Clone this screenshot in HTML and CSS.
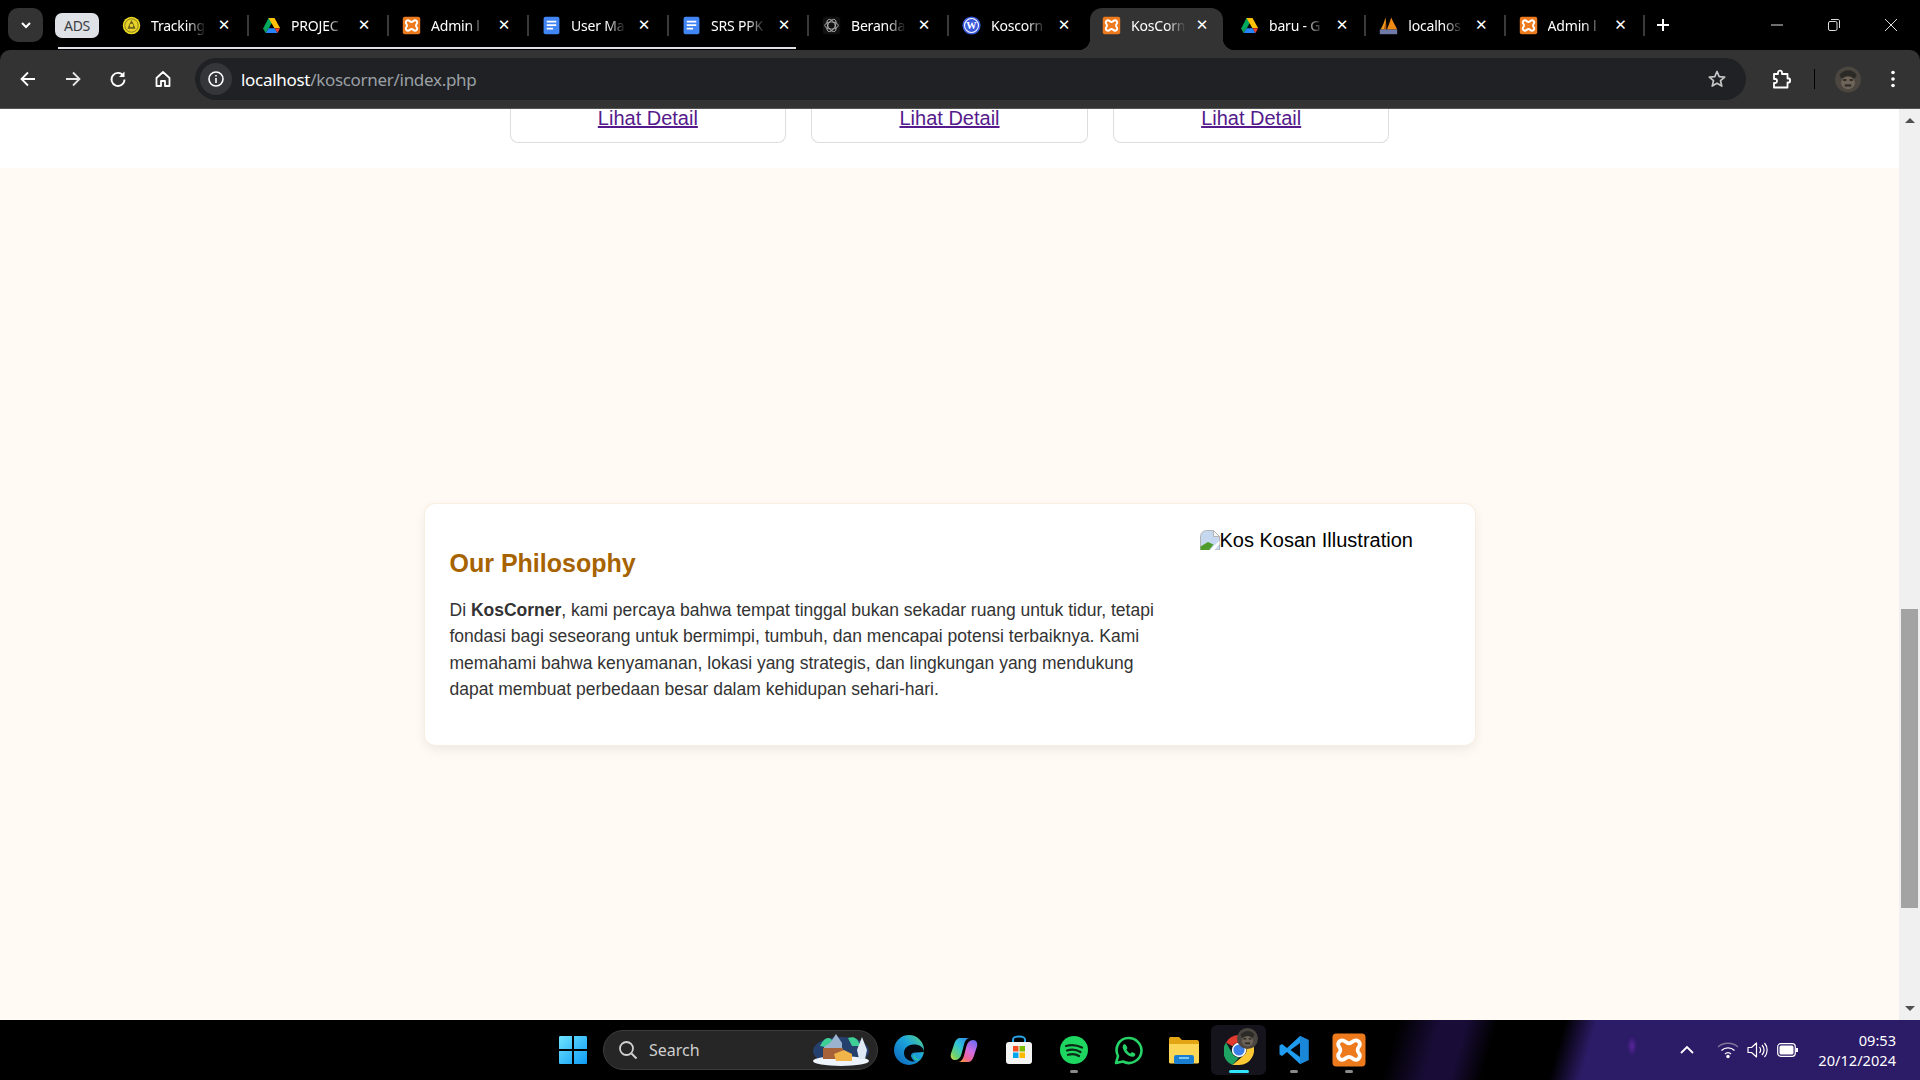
FILE: index.html
```html
<!DOCTYPE html>
<html>
    <head>
        <meta charset="utf-8">
        <title>KosCorner</title>
        <link rel="stylesheet" href="styles.css">
    </head>
    <body>
        <svg class="defs" width="0" height="0">
            <defs>
                <symbol id="i-xampp" viewBox="0 0 24 24">
                    <rect x="1" y="1" width="22" height="22" rx="2.500" fill="#ee7a1e"/>
                    <path d="M7.500 5.500C9.500 5.500 10 7.500 12 7.500 14 7.500 14.500 5.500 16.500 5.500 19 5.500 20 8.500 18.500 10 17.500 11 17.500 13 18.500 14 20 15.500 19 18.500 16.500 18.500 14.500 18.500 14 16.500 12 16.500 10 16.500 9.500 18.500 7.500 18.500 5 18.500 4 15.500 5.500 14 6.500 13 6.500 11 5.500 10 4 8.500 5 5.500 7.500 5.500Z" fill="none" stroke="#fff" stroke-width="2.500" stroke-linejoin="round"/>
                </symbol>
                <symbol id="i-drive" viewBox="0 0 24 24">
                    <path d="M8.200 2.500H15.800L12 9.500 8 16.500H1.200Z" fill="#00a85d"/>
                    <path d="M8.200 2.500H15.800L22.800 15H15.500Z" fill="#ffc107"/>
                    <path d="M1.200 15.500H8.500L5 21.500H4.500Z" fill="#0f9d58"/>
                    <path d="M8.500 15.500H16L19.500 21.500H4.800Z" fill="#2684fc"/>
                    <path d="M16 15.500H22.800L19.500 21.500Z" fill="#ea4335"/>
                </symbol>
                <symbol id="i-docs" viewBox="0 0 24 24">
                    <rect x="2" y="1" width="20" height="22" rx="2.500" fill="#4285f4"/>
                    <path d="M6 7H18M6 11.500H18M6 16H14" stroke="#fff" stroke-width="2.200" fill="none"/>
                </symbol>
                <symbol id="i-seal" viewBox="0 0 24 24">
                    <circle cx="12" cy="12" r="11" fill="#f0dc1e"/>
                    <circle cx="12" cy="12" r="8.500" fill="#e8d22a" stroke="#6f6420" stroke-width="1"/>
                    <path d="M12 5L15 11 17 16H7L9 11Z" fill="#6a5f1e"/>
                    <circle cx="12" cy="12" r="2.200" fill="#e8d22a"/>
                </symbol>
                <symbol id="i-gpt" viewBox="0 0 24 24">
                    <rect x="1" y="1" width="22" height="22" rx="4" fill="#111"/>
                    <g fill="none" stroke="#b9b9b9" stroke-width="1.100">
                        <ellipse cx="12" cy="12" rx="8.500" ry="4.500"/>
                        <ellipse cx="12" cy="12" rx="8.500" ry="4.500" transform="rotate(60 12 12)"/>
                        <ellipse cx="12" cy="12" rx="8.500" ry="4.500" transform="rotate(120 12 12)"/>
                    </g>
                </symbol>
                <symbol id="i-wp" viewBox="0 0 24 24">
                    <circle cx="12" cy="12" r="11.500" fill="#3c5bdc"/>
                    <circle cx="12" cy="12" r="8.800" fill="none" stroke="#fff" stroke-width="1.300"/>
                    <text x="12" y="16.500" text-anchor="middle" font-family="Liberation Serif, serif" font-size="13" font-weight="700" fill="#fff">W</text>
                </symbol>
                <symbol id="i-pma" viewBox="0 0 24 24">
                    <path d="M2 17C5 12 7 7 8 2 9 7 9.500 12 9 17Z" fill="#f29a1f"/>
                    <path d="M10 17C12 12 14 7 15.500 2 18 8 21 13 23 17Z" fill="#f08a12"/>
                    <path d="M6 17C7 13 8 10 8 6 9 10 9 13 9 17Z" fill="#b9590c"/>
                    <rect x="1" y="17" width="22" height="6" fill="#6f7aa6"/>
                </symbol>
                <symbol id="i-avatar" viewBox="0 0 24 24">
                    <circle cx="12" cy="12" r="12" fill="#4b463f"/>
                    <path d="M4 8C8 2 17 2 20 8L18 11H6Z" fill="#2c2a27"/>
                    <ellipse cx="12" cy="15" rx="6.500" ry="6" fill="#6e6558"/>
                    <path d="M7.500 12.500H10.500M13.500 12.500H16.500" stroke="#1d1b19" stroke-width="1.500"/>
                    <path d="M9 17.500H15" stroke="#2c2a27" stroke-width="2"/>
                </symbol>
            </defs>
        </svg>

        <div class="tabstrip">
            <button class="tab-search">
                <svg width="14" height="14" viewBox="0 0 14 14"><path d="M3 5l4 4 4-4" fill="none" stroke="#fff" stroke-width="2"/></svg>
            </button>
            <span class="group-pill">ADS</span>
            <div class="tabs">
                <div class="tab"><svg class="fav"><use href="#i-seal"/></svg><span class="tab-title">Tracking</span><span class="tab-x">&#10005;</span></div>
                <div class="tab"><svg class="fav"><use href="#i-drive"/></svg><span class="tab-title">PROJEC</span><span class="tab-x">&#10005;</span></div>
                <div class="tab"><svg class="fav"><use href="#i-xampp"/></svg><span class="tab-title">Admin l</span><span class="tab-x">&#10005;</span></div>
                <div class="tab"><svg class="fav"><use href="#i-docs"/></svg><span class="tab-title">User Ma</span><span class="tab-x">&#10005;</span></div>
                <div class="tab"><svg class="fav"><use href="#i-docs"/></svg><span class="tab-title">SRS PPK</span><span class="tab-x">&#10005;</span></div>
                <div class="tab"><svg class="fav"><use href="#i-gpt"/></svg><span class="tab-title">Beranda</span><span class="tab-x">&#10005;</span></div>
                <div class="tab no-sep"><svg class="fav"><use href="#i-wp"/></svg><span class="tab-title">Koscorn</span><span class="tab-x">&#10005;</span></div>
                <div class="tab active"><svg class="fav"><use href="#i-xampp"/></svg><span class="tab-title">KosCorn</span><span class="tab-x">&#10005;</span></div>
                <div class="tab"><svg class="fav"><use href="#i-drive"/></svg><span class="tab-title">baru - G</span><span class="tab-x">&#10005;</span></div>
                <div class="tab"><svg class="fav"><use href="#i-pma"/></svg><span class="tab-title">localhos</span><span class="tab-x">&#10005;</span></div>
                <div class="tab"><svg class="fav"><use href="#i-xampp"/></svg><span class="tab-title">Admin l</span><span class="tab-x">&#10005;</span></div>
            </div>
            <span class="new-tab">
                <svg width="16" height="16" viewBox="0 0 16 16"><path d="M8 2V14M2 8H14" stroke="#fff" stroke-width="2"/></svg>
            </span>
            <div class="win-btns">
                <svg width="14" height="14" viewBox="0 0 14 14"><path d="M1 7H13" stroke="#ddd" stroke-width="1"/></svg>
                <svg width="14" height="14" viewBox="0 0 14 14"><rect x="1.500" y="3.500" width="8.500" height="9" rx="1.500" fill="none" stroke="#ddd"/><path d="M4 1.500H11C12 1.500 12.500 2 12.500 3V10" fill="none" stroke="#ddd"/></svg>
                <svg width="14" height="14" viewBox="0 0 14 14"><path d="M1 1L13 13M13 1L1 13" stroke="#ddd" stroke-width="1"/></svg>
            </div>
        </div>

        <div class="toolbar">
            <div class="nav-btns">
                <svg width="20" height="20" viewBox="0 0 20 20"><path d="M17 10H4M10 3.500L3.500 10 10 16.500" fill="none" stroke="#fff" stroke-width="1.800"/></svg>
                <svg width="20" height="20" viewBox="0 0 20 20"><path d="M3 10H16M10 3.500L16.500 10 10 16.500" fill="none" stroke="#e8e8e8" stroke-width="1.800"/></svg>
                <svg width="20" height="20" viewBox="0 0 20 20"><path d="M15.500 7A6.500 6.500 0 1 0 16.500 10.500" fill="none" stroke="#fff" stroke-width="1.800"/><path d="M16.500 2.500V8H11Z" fill="#fff"/></svg>
                <svg width="20" height="20" viewBox="0 0 20 20"><path d="M3.500 9L10 3 16.500 9V17H12V12H8V17H3.500Z" fill="none" stroke="#fff" stroke-width="1.800" stroke-linejoin="round"/></svg>
            </div>
            <div class="omnibox">
                <span class="site-info">
                    <svg width="18" height="18" viewBox="0 0 18 18"><circle cx="9" cy="9" r="7" fill="none" stroke="#fff" stroke-width="1.600"/><path d="M9 8V13M9 5V6.500" stroke="#fff" stroke-width="1.600"/></svg>
                </span>
                <span class="url"><b>localhost</b>/koscorner/index.php</span>
                <svg class="star" width="20" height="20" viewBox="0 0 20 20"><path d="M10 2.500L12.200 7.600 17.700 8.100 13.500 11.700 14.800 17.100 10 14.300 5.200 17.100 6.500 11.700 2.300 8.100 7.800 7.600Z" fill="none" stroke="#c4c7c5" stroke-width="1.700" stroke-linejoin="round"/></svg>
            </div>
            <svg class="ext" width="22" height="22" viewBox="0 0 22 22"><path d="M4 6H8V4.500C8 2 12 2 12 4.500V6H17.500V10.500H19C20.500 10.500 20.500 14.500 19 14.500H17.500V19.500H4V15H5.500C7.500 15 7.500 11 5.500 11H4Z" fill="none" stroke="#fff" stroke-width="1.800" stroke-linejoin="round"/></svg>
            <span class="tool-sep"></span>
            <svg class="profile"><use href="#i-avatar"/></svg>
            <svg class="kebab" width="6" height="20" viewBox="0 0 6 20"><circle cx="3" cy="3.500" r="1.800" fill="#fff"/><circle cx="3" cy="10" r="1.800" fill="#fff"/><circle cx="3" cy="16.500" r="1.800" fill="#fff"/></svg>
        </div>

        <div class="viewport">
            <div class="page">
                <section class="rooms">
                    <div class="room-card"><a href="#">Lihat Detail</a></div>
                    <div class="room-card"><a href="#">Lihat Detail</a></div>
                    <div class="room-card"><a href="#">Lihat Detail</a></div>
                </section>
                <section class="about">
                    <div class="about-card">
                        <div class="about-text">
                            <h2>Our Philosophy</h2>
                            <p>Di <strong>KosCorner</strong>, kami percaya bahwa tempat tinggal bukan sekadar ruang untuk tidur, tetapi fondasi bagi seseorang untuk bermimpi, tumbuh, dan mencapai potensi terbaiknya. Kami memahami bahwa kenyamanan, lokasi yang strategis, dan lingkungan yang mendukung dapat membuat perbedaan besar dalam kehidupan sehari-hari.</p>
                        </div>
                        <div class="about-img">
                            <svg class="broken" width="20" height="20" viewBox="0 0 20 20">
                                <path d="M.500 7C.500 3 3 .500 7 .500H13.500L19.500 6.500V20H.500Z" fill="#c6d8f0" stroke="#b4b4b4"/>
                                <path d="M13.500 .500V6.500H19.500Z" fill="#f4f4f4" stroke="#b4b4b4"/>
                                <path d="M.500 20V16.500L8 12 13.500 14.500 9 20Z" fill="#4e9b2c"/>
                                <path d="M10 20L19.500 10.500V14L14.500 20Z" fill="#fff"/>
                            </svg><span class="alt-text">Kos Kosan Illustration</span>
                        </div>
                    </div>
                </section>
            </div>
            <div class="scrollbar">
                <span class="arrow-up"></span>
                <div class="scroll-track"><div class="scroll-thumb"></div></div>
                <span class="arrow-down"></span>
            </div>
        </div>

        <div class="taskbar">
            <svg class="win-logo" width="30" height="30" viewBox="0 0 30 30">
                <defs><linearGradient id="win" x1="0" y1="0" x2="1" y2="1"><stop offset="0" stop-color="#6ee4ff"/><stop offset="1" stop-color="#0f9bf5"/></linearGradient></defs>
                <path d="M1 2.500C1 1.500 1.500 1 2.500 1H14V14H1ZM16 1H27.500C28.500 1 29 1.500 29 2.500V14H16ZM1 16H14V29H2.500C1.500 29 1 28.500 1 27.500ZM16 16H29V27.500C29 28.500 28.500 29 27.500 29H16Z" fill="url(#win)"/>
            </svg>
            <div class="search-box">
                <svg width="20" height="20" viewBox="0 0 20 20"><circle cx="8.500" cy="8.500" r="6.500" fill="none" stroke="#d0d0d0" stroke-width="1.800"/><path d="M13.500 13.500L18.500 18.500" stroke="#d0d0d0" stroke-width="2"/></svg>
                <span class="search-label">Search</span>
                <svg class="search-art" width="58" height="32" viewBox="0 0 58 32">
                    <ellipse cx="29" cy="17" rx="28" ry="14" fill="#26406e"/>
                    <path d="M8 12C12 4 16 2 20 6L18 14ZM36 4C42 2 46 4 48 12L40 12Z" fill="#3ecf96"/>
                    <ellipse cx="29" cy="27" rx="28" ry="5" fill="#eef4fb"/>
                    <path d="M18 9L24 0 30 9V14H12V13Z" fill="#9cb3cf"/>
                    <rect x="11" y="14" width="20" height="11" fill="#a8623a"/>
                    <path d="M22 20L32 16 40 20V27H24Z" fill="#f0b44a"/>
                    <path d="M50 3L55 16 53 25H47L45 16Z" fill="#dfe9f3"/>
                </svg>
            </div>
            <div class="pinned">
                <span class="pin">
                    <svg width="32" height="32" viewBox="0 0 32 32">
                        <defs><linearGradient id="edge" x1="0" y1="1" x2="1" y2="0"><stop offset="0" stop-color="#0b5fb8"/><stop offset="0.6" stop-color="#1da5dc"/><stop offset="1" stop-color="#5ed57a"/></linearGradient></defs>
                        <circle cx="16" cy="16" r="15" fill="url(#edge)"/>
                        <path d="M31 18C31 13 26 10.500 21 10.500 14 10.500 11 15 11 19 11 25 17 28 22 27.500 19 25.500 18 23 18 21.500 18 19 21 18 24 18.500Z" fill="#05080f"/>
                        <path d="M20 21C20 26 25 28 28 25 25 26 22 24 22 21Z" fill="#2bc1a2"/>
                    </svg>
                </span>
                <span class="pin">
                    <svg width="30" height="30" viewBox="0 0 30 30">
                        <defs><linearGradient id="cop1" x1="1" y1="0" x2="0" y2="1"><stop offset="0" stop-color="#2f7ff0"/><stop offset="0.45" stop-color="#2fc4d8"/><stop offset="0.8" stop-color="#6fd36a"/><stop offset="1" stop-color="#e9dc4a"/></linearGradient><linearGradient id="cop2" x1="0.800" y1="0" x2="0.200" y2="1"><stop offset="0" stop-color="#6d6cf0"/><stop offset="0.45" stop-color="#d46be0"/><stop offset="0.8" stop-color="#f2688c"/><stop offset="1" stop-color="#f59a3c"/></linearGradient></defs>
                        <path d="M11 3H21C17.500 3 16 6 15 9.500L12.500 19C11.500 23 9 25 6 25 2.500 25 1 22 2 18.500L5.500 8C6.500 5 8.500 3 11 3Z" fill="url(#cop1)"/>
                        <path d="M19 27H9C12.500 27 14 24 15 20.500L17.500 11C18.500 7 21 5 24 5 27.500 5 29 8 28 11.500L24.500 22C23.500 25 21.500 27 19 27Z" fill="url(#cop2)"/>
                    </svg>
                </span>
                <span class="pin">
                    <svg width="30" height="30" viewBox="0 0 30 30">
                        <path d="M9 8V5C9 2 11 1.500 15 1.500S21 2 21 5V8" fill="none" stroke="#2aa4e8" stroke-width="2"/>
                        <rect x="2" y="7" width="26" height="22" rx="3" fill="#f4f4f4"/>
                        <rect x="9" y="11" width="5.500" height="5.500" fill="#f25022"/>
                        <rect x="15.500" y="11" width="5.500" height="5.500" fill="#7fba00"/>
                        <rect x="9" y="17.500" width="5.500" height="5.500" fill="#00a4ef"/>
                        <rect x="15.500" y="17.500" width="5.500" height="5.500" fill="#ffb900"/>
                    </svg>
                </span>
                <span class="pin open">
                    <svg width="28" height="28" viewBox="0 0 28 28">
                        <circle cx="14" cy="14" r="14" fill="#1ed760"/>
                        <path d="M6 10C11 8.500 17 9 22 11.500M7 14.500C11.500 13 16.500 13.500 20.500 16M8 18.800C12 17.500 16 18 19 20" fill="none" stroke="#0c2a16" stroke-width="2.200" stroke-linecap="round"/>
                    </svg>
                </span>
                <span class="pin">
                    <svg width="31" height="31" viewBox="0 0 31 31">
                        <path d="M3 28L5 21C1 13 6 3 15.500 3 23 3 28.500 9 28.500 15.500 28.500 25 18 31 10 26.500Z" fill="none" stroke="#25d366" stroke-width="2.600" stroke-linejoin="round"/>
                        <path d="M10.500 9.500C9 11 9.500 14 12 17.500 15 21 19 22.500 21 21.500 22.500 20.500 22.500 19 22 18.500L19 17 17.500 18.500C16 18 14 16 13.500 14.500L14.500 13 13 10C12.500 9 11.500 9 10.500 9.500Z" fill="#25d366"/>
                    </svg>
                </span>
                <span class="pin">
                    <svg width="30" height="28" viewBox="0 0 30 28">
                        <path d="M0 3C0 1.500 1 1 2 1H10L13 4H28C29 4 30 5 30 6V10H0Z" fill="#e3a514"/>
                        <path d="M0 8H30V26C30 27 29 27.500 28 27.500H2C1 27.500 0 27 0 26Z" fill="#fcd657"/>
                        <rect x="5" y="19" width="20" height="9" rx="2" fill="#1a7fd0"/>
                        <rect x="10" y="21" width="10" height="2" fill="#7cc8f5"/>
                    </svg>
                </span>
                <span class="pin current">
                    <svg width="30" height="30" viewBox="0 0 30 30">
                        <path d="M15 0A15 15 0 0 1 28 7.500H15A7.500 7.500 0 0 0 8.500 11.250L2 7.500A15 15 0 0 1 15 0Z" fill="#e33b2e"/>
                        <path d="M2 7.500L8.500 18.750A7.500 7.500 0 0 0 15 22.500L8.500 30A15 15 0 0 1 2 7.500Z" fill="#1ea362"/>
                        <path d="M15 7.500H28A15 15 0 0 1 15 30H8.500L21.500 18.750A7.500 7.500 0 0 0 15 7.500Z" fill="#fcc934"/>
                        <circle cx="15" cy="15" r="7.200" fill="#fff"/>
                        <circle cx="15" cy="15" r="5.600" fill="#3c7ee8"/>
                    </svg>
                    <svg class="pin-badge"><use href="#i-avatar"/></svg>
                </span>
                <span class="pin open">
                    <svg width="30" height="30" viewBox="0 0 30 30">
                        <path d="M21 1L29.500 5V25L21 29 8 17 3 21 .500 19.500V10.500L3 9 8 13Z" fill="#1f9cf0"/>
                        <path d="M21 8L11.500 15 21 22Z" fill="#05070f"/>
                        <path d="M21 1V29L29.500 25V5Z" fill="#1a86d8"/>
                    </svg>
                </span>
                <span class="pin open">
                    <svg width="36" height="36"><use href="#i-xampp"/></svg>
                </span>
            </div>
            <div class="tray">
                <svg class="tray-up" width="14" height="10" viewBox="0 0 14 10"><path d="M1 8L7 2 13 8" fill="none" stroke="#fff" stroke-width="1.800"/></svg>
                <svg width="22" height="18" viewBox="0 0 22 18"><path d="M1 6C6 1 16 1 21 6" fill="none" stroke="#7d7799" stroke-width="1.300"/><path d="M4.500 9.500C8 6 14 6 17.500 9.500M8 13C10 11.200 12 11.200 14 13" fill="none" stroke="#fff" stroke-width="1.300"/><circle cx="11" cy="15.500" r="1.700" fill="#fff"/></svg>
                <svg width="22" height="18" viewBox="0 0 22 18"><path d="M1 6.500H4.500L9.500 2V16L4.500 11.500H1Z" fill="none" stroke="#fff" stroke-width="1.200" stroke-linejoin="round"/><path d="M12.500 6C14 8 14 10 12.500 12M15 4C17.500 7 17.500 11 15 14M17.500 2C21 6 21 12 17.500 16" fill="none" stroke="#fff" stroke-width="1.200"/></svg>
                <svg width="21" height="14" viewBox="0 0 21 14"><rect x=".700" y=".700" width="17.600" height="12.600" rx="3" fill="none" stroke="#fff" stroke-width="1.200"/><rect x="2.500" y="2.500" width="14" height="9" rx="1.500" fill="#fff"/><rect x="19" y="5" width="2" height="4" fill="#fff"/></svg>
                <div class="clock"><span>09:53</span><span>20/12/2024</span></div>
            </div>
        </div>
    </body>
</html>
```
FILE: styles.css
```css
*{
    box-sizing: border-box;
}
html, body{
    margin: 0;
    height: 100%;
    overflow: hidden;
}
body{
    display: flex;
    flex-direction: column;
    height: 1080px;
    background-color: black;
    font-family: "Noto Sans", sans-serif;
}
.defs{
    position: absolute;
}

/* tab strip */
.tabstrip{
    height: 50px;
    flex: none;
    display: flex;
    align-items: center;
    background-color: black;
    padding-left: 8px;
    position: relative;
    isolation: isolate;
    color: white;
}
.tab-search{
    width: 35px;
    height: 34px;
    border: none;
    border-radius: 10px;
    background-color: #333;
    display: flex;
    align-items: center;
    justify-content: center;
    padding: 0;
}
.group-pill{
    width: 44px;
    height: 25px;
    margin-left: 12px;
    border-radius: 7px;
    background-color: #dee1e6;
    color: #3c4043;
    font-size: 14px;
    letter-spacing: -0.3px;
    display: flex;
    align-items: center;
    justify-content: center;
}
.tabs{
    display: flex;
    margin-left: 9px;
    height: 50px;
}
/* the white underline of the ADS tab group */
.tabs::before{
    content: "";
    position: absolute;
    left: 58px;
    top: 47px;
    width: 738px;
    height: 2px;
    background-color: #dee1e6;
}
.tab{
    width: 140px;
    height: 50px;
    padding-left: 14px;
    display: flex;
    align-items: center;
    position: relative;
    font-size: 14px;
}
.tab:nth-child(n+9){
    width: 139.3px;
}
.tab::after{
    content: "";
    position: absolute;
    right: -1px;
    top: 15px;
    width: 2px;
    height: 21px;
    background-color: #3a3a3a;
}
.tab.no-sep::after{
    display: none;
}
.tab.active{
    width: 138px;
}
.tab.active .tab-x{
    margin-left: 6px;
}
.tab.active::before{
    content: "";
    position: absolute;
    left: 2px;
    right: 3px;
    top: 8px;
    bottom: 0;
    z-index: -1;
    background-color: #333;
    border-radius: 12px 12px 0 0;
}
/* the two concave corners at the foot of the active tab */
.tab.active::after{
    left: -10px;
    right: -9px;
    top: auto;
    bottom: 0;
    width: auto;
    height: 12px;
    z-index: -1;
    background:
        radial-gradient(circle at 0 0, transparent 12px, #333 12.5px) 0 0 / 12px 12px no-repeat,
        radial-gradient(circle at 100% 0, transparent 12px, #333 12.5px) 100% 0 / 12px 12px no-repeat;
}
.fav{
    width: 19px;
    height: 19px;
    flex: none;
}
.tab-title{
    width: 55px;
    margin-left: 10px;
    white-space: nowrap;
    overflow: hidden;
    letter-spacing: -0.2px;
    -webkit-mask-image: linear-gradient(to right, black 65%, transparent 100%);
    mask-image: linear-gradient(to right, black 65%, transparent 100%);
}
.tab-x{
    width: 20px;
    margin-left: 8px;
    text-align: center;
    font-size: 15px;
    font-family: "DejaVu Sans", sans-serif;
}
.new-tab{
    margin-left: 11px;
    display: flex;
}
.win-btns{
    margin-left: auto;
    display: flex;
    gap: 43px;
    padding-right: 22px;
}

/* toolbar */
.toolbar{
    height: 59px;
    flex: none;
    display: flex;
    align-items: center;
    background-color: #333;
    border-bottom: 1px solid #555;
    border-radius: 10px 10px 0 0;
    padding-left: 18px;
    padding-right: 23px;
}
.nav-btns{
    display: flex;
    gap: 25px;
}
.omnibox{
    width: 1551px;
    height: 42px;
    margin-left: 22px;
    border-radius: 21px;
    background-color: #202124;
    display: flex;
    align-items: center;
    padding-left: 5px;
    padding-right: 19px;
}
.site-info{
    width: 32px;
    height: 32px;
    border-radius: 50%;
    background-color: #35363a;
    display: flex;
    align-items: center;
    justify-content: center;
}
.url{
    margin-left: 9px;
    font-size: 17px;
    letter-spacing: -0.3px;
    color: #9aa0a6;
}
.url b{
    font-weight: 400;
    color: white;
}
.star{
    margin-left: auto;
}
.ext{
    margin-left: 24px;
}
.tool-sep{
    width: 1px;
    height: 20px;
    margin-left: 22px;
    background-color: black;
}
.profile{
    width: 26px;
    height: 27px;
    margin-left: 20px;
}
.kebab{
    margin-left: 29px;
}

/* page */
.viewport{
    flex: 1;
    min-height: 0;
    display: flex;
    background-color: white;
}
.page{
    flex: 1;
    overflow: hidden;
    font-family: "Liberation Sans", Arial, sans-serif;
}
.rooms{
    height: 59px;
    display: flex;
    justify-content: center;
    gap: 25px;
}
.room-card{
    width: 276.67px;
    height: 34px;
    border: 1px solid #ddd;
    border-top: none;
    border-radius: 0 0 8px 8px;
    text-align: center;
    font-size: 20px;
    line-height: 19px;
}
.room-card a{
    color: #551a8b;
}
.about{
    height: 852px;
    background-color: #fffaf3;
    padding-top: 336px;
}
.about-card{
    width: 1050px;
    margin: 0 auto;
    padding: 25px;
    display: flex;
    gap: 25px;
    background-color: white;
    border-radius: 10px;
    box-shadow: 0 0 0 1px #f8eee2, 0 4px 12px rgba(0, 0, 0, 0.08);
}
.about-text{
    flex: 1;
}
.about-text h2{
    margin: 20px 0 19px;
    font-size: 25px;
    line-height: 29px;
    color: #a66300;
}
.about-text p{
    margin: 0 0 17.6px;
    font-size: 17.5px;
    line-height: 26.4px;
    color: #333;
}
.about-img{
    width: 250px;
    flex: none;
    color: black;
    font-size: 20px;
    line-height: 23px;
}
.broken{
    vertical-align: -3px;
}

/* scrollbar */
.scrollbar{
    width: 21px;
    flex: none;
    display: flex;
    flex-direction: column;
    align-items: center;
    background-color: #f0f0f0;
}
.arrow-up, .arrow-down{
    width: 0;
    height: 0;
    border-left: 5px solid transparent;
    border-right: 5px solid transparent;
    flex: none;
}
.arrow-up{
    margin-top: 9px;
    border-bottom: 5px solid #505050;
}
.arrow-down{
    margin-bottom: 9px;
    border-top: 5px solid #505050;
}
.scroll-track{
    flex: 1;
    padding-top: 486px;
}
.scroll-thumb{
    width: 17px;
    height: 299px;
    background-color: #a3a3a3;
}

/* taskbar */
.taskbar{
    height: 60px;
    flex: none;
    display: flex;
    align-items: center;
    padding-left: 558px;
    padding-right: 24px;
    color: white;
    background:
        radial-gradient(ellipse 5px 10px at 1632px 26px, rgba(110, 40, 180, 0.7), transparent),
        linear-gradient(106deg, transparent 1345px, rgba(50, 25, 110, 0.5) 1385px, rgba(50, 25, 110, 0.5) 1410px, transparent 1440px, transparent 1505px, #2c1b66 1535px),
        black;
}
.search-box{
    width: 275px;
    height: 40px;
    margin-left: 15px;
    border-radius: 20px;
    background-color: #262626;
    border: 1px solid #3c3c3c;
    display: flex;
    align-items: center;
    padding-left: 14px;
    padding-right: 7px;
}
.search-label{
    margin-left: 11px;
    font-size: 16px;
    color: #cfcfcf;
}
.search-art{
    margin-left: auto;
}
.pinned{
    display: flex;
    margin-left: 3px;
}
.pin{
    width: 55px;
    height: 50px;
    display: flex;
    align-items: center;
    justify-content: center;
    position: relative;
}
.pin.open::after, .pin.current::after{
    content: "";
    position: absolute;
    left: 50%;
    bottom: 2px;
    height: 3px;
    border-radius: 2px;
}
.pin.open::after{
    width: 8px;
    margin-left: -4px;
    background-color: #8a8a8a;
}
.pin.current{
    background-color: #15131c;
    border-radius: 6px;
}
.pin.current::after{
    width: 20px;
    margin-left: -10px;
    background-color: #2fe6fa;
}
.pin-badge{
    position: absolute;
    left: 26px;
    top: 3px;
    width: 21px;
    height: 21px;
}
.tray{
    margin-left: auto;
    display: flex;
    align-items: center;
    gap: 8px;
}
.tray-up{
    margin-right: 15px;
}
.clock{
    margin-left: 12px;
    display: flex;
    flex-direction: column;
    align-items: flex-end;
    font-size: 14.6px;
    line-height: 20px;
}
```
